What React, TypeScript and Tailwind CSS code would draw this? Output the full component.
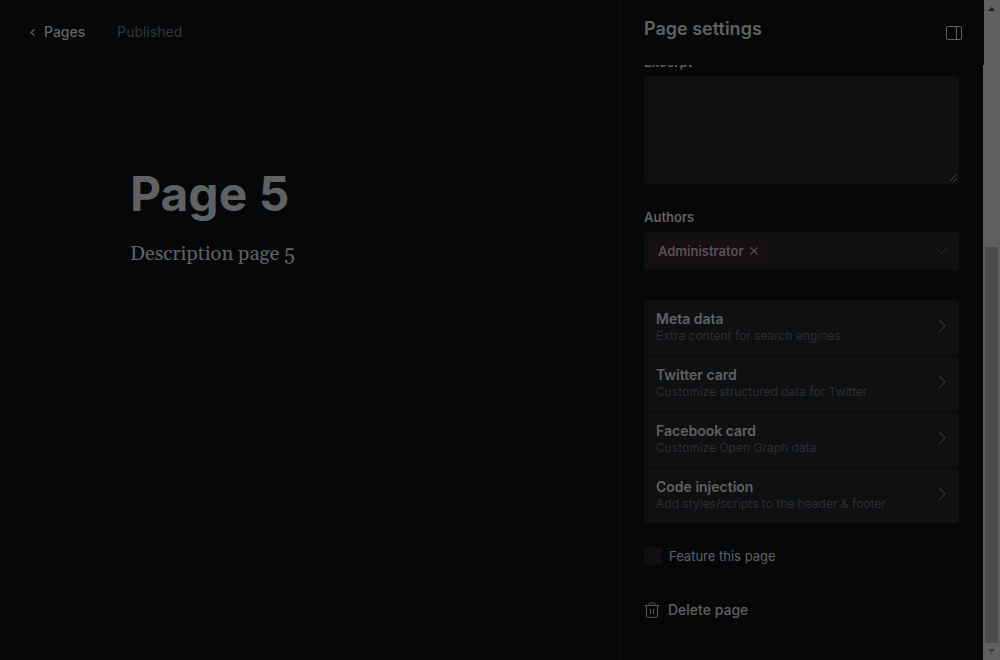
import { useState } from "react";

const cards = [
  { title: "Meta data", detail: "Extra content for search engines" },
  { title: "Twitter card", detail: "Customize structured data for Twitter" },
  { title: "Facebook card", detail: "Customize Open Graph data" },
  { title: "Code injection", detail: "Add styles/scripts to the header & footer" },
];

function EditorHeader() {
  return (
    <header className="flex items-center gap-8 px-[30px] pt-[22px]">
      <a href="#pages" className="flex items-center gap-[9px] text-sm leading-5 font-medium text-[#636465]">
        <svg className="mt-px h-[7px] w-[5px]" viewBox="0 0 5 7" fill="none" stroke="currentColor" strokeWidth="1.2" aria-hidden="true">
          <path d="M4.5 0.3 1 3.5l3.5 3.2" />
        </svg>
        Pages
      </a>
      <span className="text-sm leading-5 text-[#343638]">Published</span>
    </header>
  );
}

function Editor() {
  return (
    <main className="min-w-0 flex-1">
      <EditorHeader />
      <article className="px-[130px] pt-[122px]">
        <h1 className="text-5xl leading-[60px] font-bold text-[#606162]">Page 5</h1>
        <p className="mt-4 font-[Georgia,Gelasio,'Liberation_Serif',serif] text-xl leading-7 text-[#606162]">
          Description page 5
        </p>
      </article>
    </main>
  );
}

function ExcerptField() {
  return (
    <section>
      <div className="flex h-[11px] items-end overflow-hidden">
        <label htmlFor="excerpt" className="mb-1 text-[13px] leading-5 font-semibold text-[#606162]">
          Excerpt
        </label>
      </div>
      <div className="relative">
        <textarea
          id="excerpt"
          className="block h-[108px] w-full resize-y rounded-[3px] bg-[#0f1012] p-3 text-sm text-[#606162] outline-none [&::-webkit-resizer]:bg-transparent"
        />
        <svg className="pointer-events-none absolute right-[2px] bottom-[2px] h-2 w-2" viewBox="0 0 8 8" stroke="#545556" strokeWidth=".8" aria-hidden="true">
          <path d="M.5 7.5l7-7M4.5 7.5l3-3" />
        </svg>
      </div>
    </section>
  );
}

function AuthorsField() {
  return (
    <section className="mt-[23px]">
      <h3 className="text-[13px] leading-5 font-semibold text-[#606162]">Authors</h3>
      <div className="mt-[5px] flex h-[38px] items-center justify-between rounded-[3px] bg-[#0f1012] pr-3 pl-[7px]">
        <span className="flex h-[23px] items-center gap-[6px] rounded-[2px] bg-[#1b0d14] px-[7px] text-[13px] leading-5 font-semibold text-[#575153]">
          Administrator
          <button type="button" aria-label="Remove Administrator">
            <svg className="block h-2 w-2" viewBox="0 0 8 8" fill="none" stroke="currentColor" strokeWidth="1.2" aria-hidden="true">
              <path d="m.4.4 7.2 7.2M7.6.4.4 7.6" />
            </svg>
          </button>
        </span>
        <button type="button" aria-label="Choose authors" className="text-[#292b2d]">
          <svg className="block h-[6px] w-[11px]" viewBox="0 0 11 6" fill="none" stroke="currentColor" aria-hidden="true">
            <path d="m.5.5 5 5 5-5" />
          </svg>
        </button>
      </div>
    </section>
  );
}

function CardList() {
  return (
    <ul className="mt-[30px] flex flex-col gap-px overflow-hidden rounded-[3px]">
      {cards.map((card) => (
        <li key={card.title}>
          <button type="button" className="flex w-full items-center justify-between bg-[#0f1012] pt-[10px] pr-[13px] pb-[11px] pl-3 text-left">
            <span className="flex flex-col">
              <span className="text-sm leading-[18px] font-semibold text-[#606162]">{card.title}</span>
              <span className="text-xs leading-4 text-[#2b2e31]">{card.detail}</span>
            </span>
            <svg className="mb-[2px] h-[14px] w-2" viewBox="0 0 8 14" fill="none" stroke="#3c3e40" aria-hidden="true">
              <path d="m.6.5 6.6 6.5-6.6 6.5" />
            </svg>
          </button>
        </li>
      ))}
    </ul>
  );
}

function Settings() {
  const [featured, setFeatured] = useState(false);
  return (
    <aside className="flex w-[364px] shrink-0 flex-col border-l border-[#0d0e10]">
      <header className="relative z-10 -mr-px flex h-[65px] shrink-0 justify-between bg-[#060709] pr-[22px] pl-6">
        <h2 className="pt-4 text-lg leading-[26px] font-semibold text-[#606162]">Page settings</h2>
        <button type="button" aria-label="Hide settings" className="mt-[26px] h-[14px] w-4 text-[#606162]">
          <svg className="block h-[14px] w-4" viewBox="0 0 16 14" fill="none" stroke="currentColor" aria-hidden="true">
            <rect x=".5" y=".5" width="15" height="13" rx=".7" />
            <path d="M10.5 .5v13" />
          </svg>
        </button>
      </header>
      <div className="pr-6 pl-6">
        <ExcerptField />
        <AuthorsField />
        <CardList />
        <div className="mt-6 flex items-center gap-[7px]">
          <input
            id="featured"
            type="checkbox"
            checked={featured}
            onChange={(event) => setFeatured(event.target.checked)}
            className="h-[18px] w-[18px] appearance-none rounded-[3px] bg-[#0f1012] checked:bg-[#606162]"
          />
          <label htmlFor="featured" className="text-[13px] leading-[18px] text-[#606162]">
            Feature this page
          </label>
        </div>
        <button type="button" className="mt-[35px] flex items-center gap-2 text-sm leading-5 font-medium text-[#606162]">
          <svg className="h-4 w-4" viewBox="0 0 16 16" fill="none" stroke="currentColor" strokeWidth=".9" strokeLinecap="round" aria-hidden="true">
            <path d="M1 3.5h14M5 3.5V2.3c0-.8.5-1.3 1.3-1.3h3.4c.8 0 1.3.5 1.3 1.3v1.2M2.5 3.5V14c0 .8.6 1.3 1.3 1.3h8.4c.7 0 1.3-.5 1.3-1.3V3.5M6.5 7.3v4.5M9.5 7.3v4.5" />
          </svg>
          Delete page
        </button>
      </div>
    </aside>
  );
}

function ScrollRail() {
  return (
    <div className="flex w-[17px] shrink-0 flex-col items-center bg-[#606060]" aria-hidden="true">
      <svg className="mt-[7px] h-1 w-[7px]" viewBox="0 0 7 4" fill="#202020">
        <path d="M3.5 0 7 4H0z" />
      </svg>
      <div className="mt-[236px] w-[13px] flex-1 bg-[#4c4c4c]" />
      <svg className="mt-[6px] mb-[7px] h-1 w-[7px]" viewBox="0 0 7 4" fill="#3c3c3c">
        <path d="M0 0h7L3.5 4z" />
      </svg>
    </div>
  );
}

export default function App() {
  return (
    <div className="flex min-h-screen bg-[#060709] font-[Inter,'Liberation_Sans',sans-serif]">
      <Editor />
      <Settings />
      <ScrollRail />
    </div>
  );
}
